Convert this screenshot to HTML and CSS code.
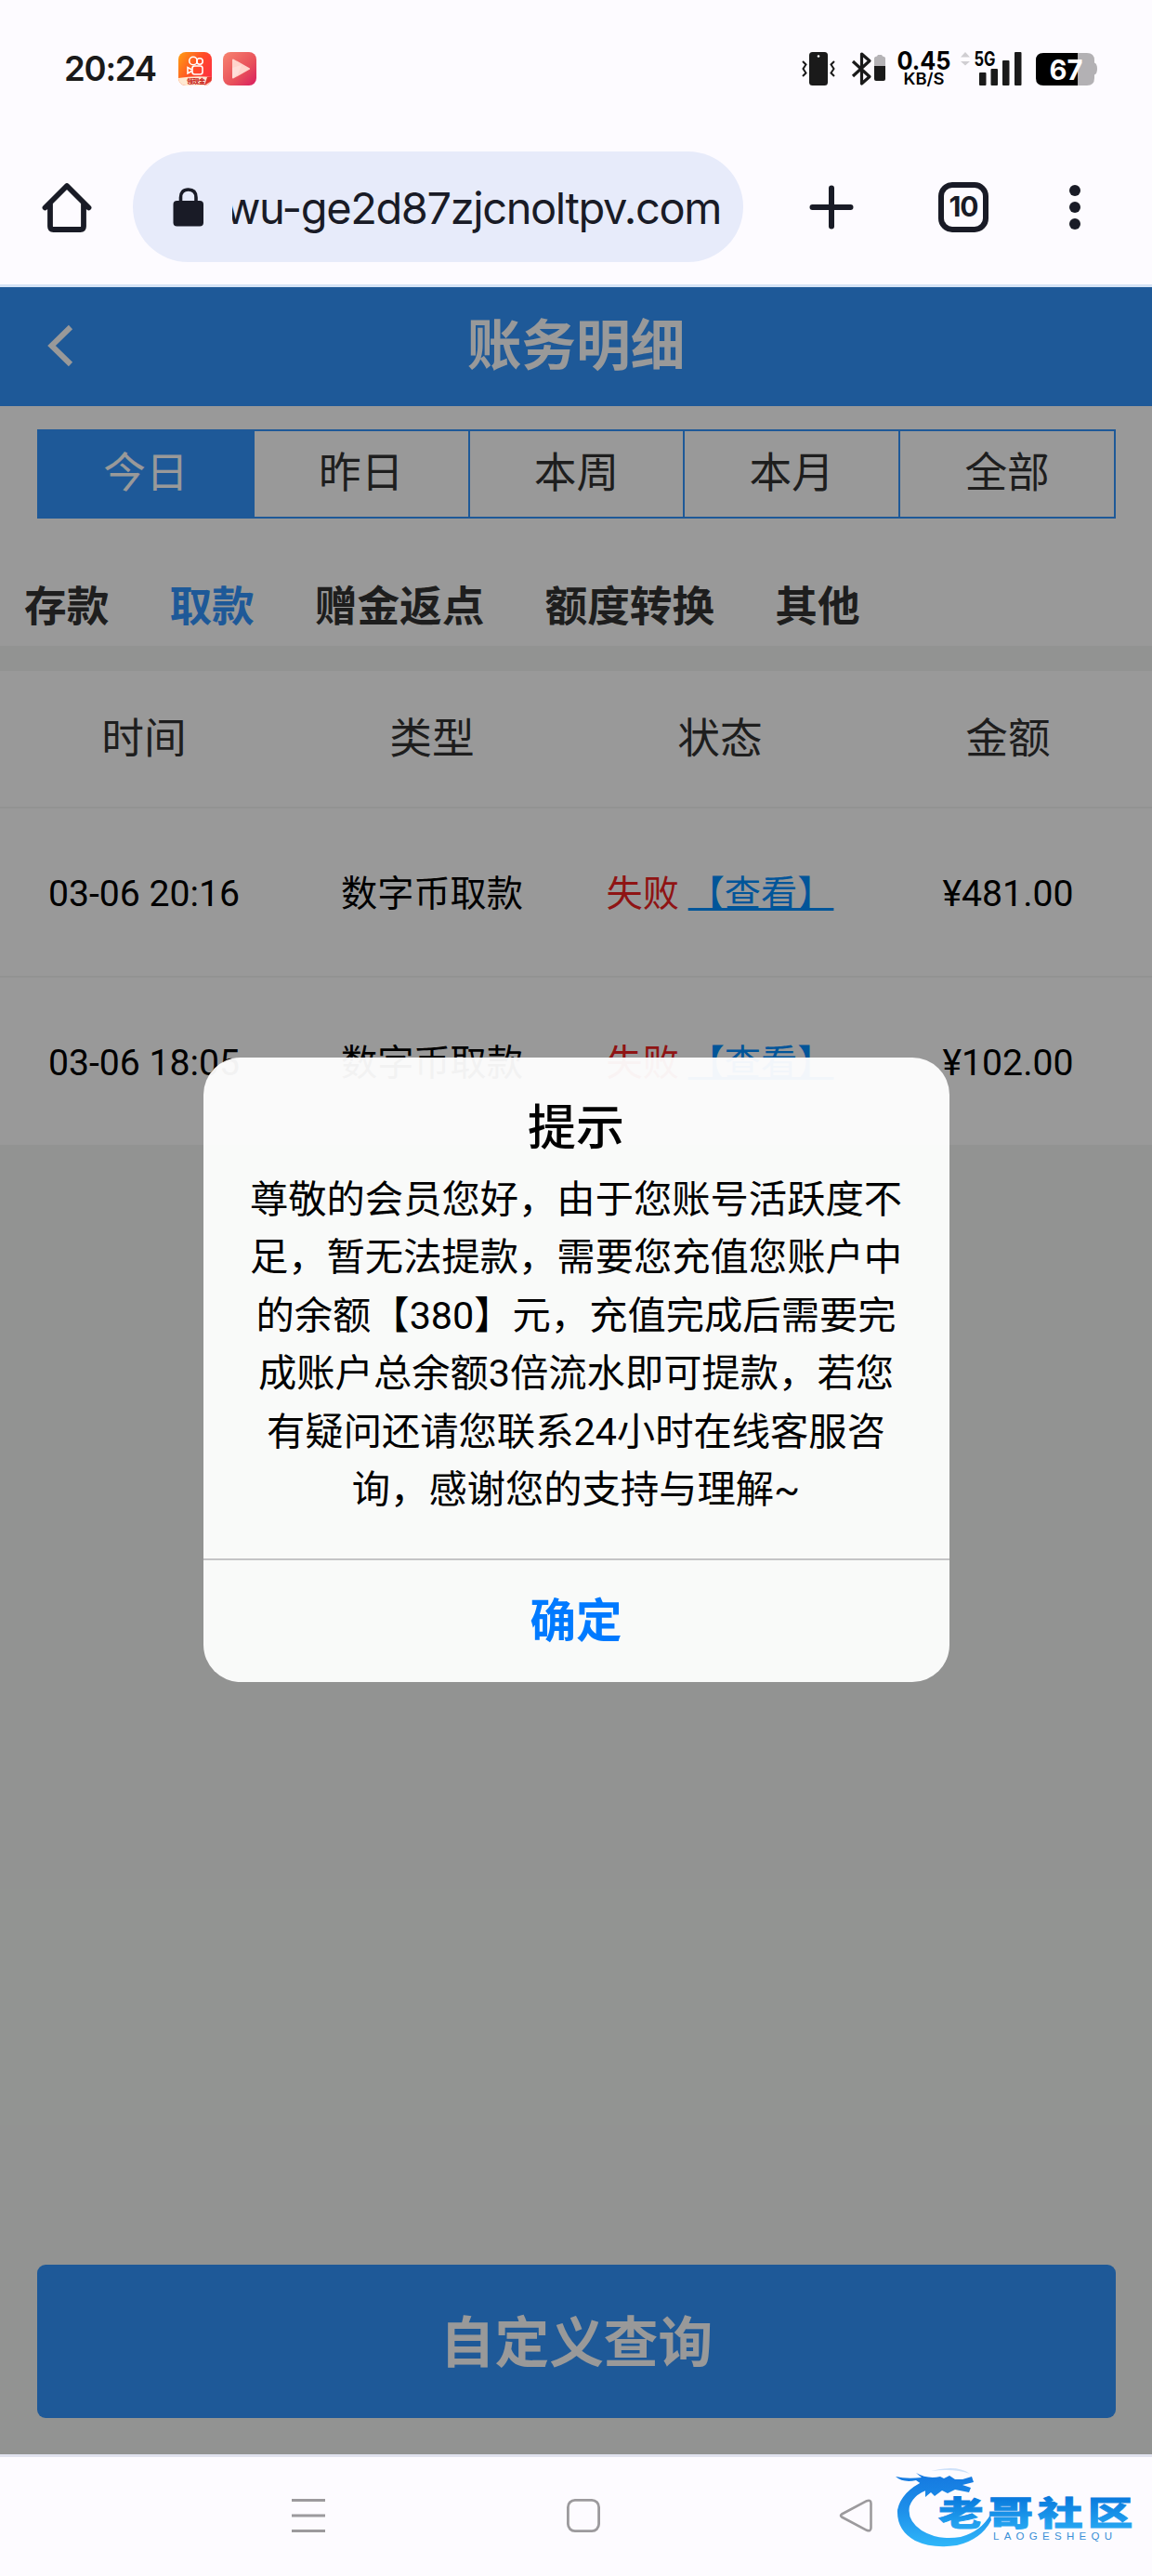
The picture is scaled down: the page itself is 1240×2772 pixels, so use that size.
FILE: index.html
```html
<!DOCTYPE html>
<html lang="zh-CN">
<head>
    <meta charset="UTF-8">
    <meta name="viewport" content="width=device-width, initial-scale=1.0">
    <title>账务明细</title>
    <link rel="stylesheet" href="styles.css">
</head>
<body>
    <div class="phone">
        <div class="status-bar">
            <span class="clock">20:24</span>
            <svg class="app-icon" width="36" height="36" viewBox="0 0 36 36">
                <defs>
                    <linearGradient id="kwai" x1="0" y1="0" x2="1" y2="0.6">
                        <stop offset="0" stop-color="#ffa012"/>
                        <stop offset="0.6" stop-color="#ff4a28"/>
                        <stop offset="1" stop-color="#ff3340"/>
                    </linearGradient>
                    <clipPath id="round"><rect width="36" height="36" rx="8"/></clipPath>
                </defs>
                <g clip-path="url(#round)">
                    <rect width="36" height="36" fill="url(#kwai)"/>
                    <path d="M0 28Q18 25 36 27L34 36H0Z" fill="#ffe9d2"/>
                    <g fill="none" stroke="#fff" stroke-width="1.6">
                        <circle cx="16" cy="9.5" r="4.3"/>
                        <circle cx="23" cy="10" r="3.2"/>
                        <rect x="15" y="15" width="11" height="9" rx="2.5"/>
                        <path d="M14.500 19L10 16.500V23L14.500 20.500"/>
                    </g>
                    <text x="9" y="34" font-size="7" font-weight="900" fill="#c8281e" textLength="20">领现金</text>
                    <path d="M31 27L28 36L36 31V27Z" fill="#e2372c"/>
                </g>
            </svg>
            <svg class="app-icon" width="36" height="36" viewBox="0 0 36 36">
                <defs>
                    <linearGradient id="video" x1="0" y1="0" x2="1" y2="1">
                        <stop offset="0" stop-color="#f78470"/>
                        <stop offset="0.6" stop-color="#e8505a"/>
                        <stop offset="1" stop-color="#d81c60"/>
                    </linearGradient>
                </defs>
                <rect width="36" height="36" rx="8" fill="url(#video)"/>
                <path d="M11 8.500L28 18L11 27.500Z" fill="#ffd5cc" stroke="#ffd5cc" stroke-width="2" stroke-linejoin="round"/>
                <path d="M10 17L20 14L16 24L10 28Z" fill="#fff" opacity="0.250"/>
            </svg>

            <svg class="status-icons" width="322" height="60" viewBox="860 44 322 60">
                <!-- vibrate -->
                <rect x="871" y="56" width="20" height="36" rx="3.500" fill="#1a1a1a"/>
                <circle cx="881" cy="60.500" r="1.300" fill="#fff"/>
                <path d="M864 66l3.500 3.500-3 4.500 3 4.500-3.500 3.500M898 66l-3.500 3.500 3 4.500-3 4.500 3.500 3.500" fill="none" stroke="#1a1a1a" stroke-width="2"/>
                <!-- bluetooth -->
                <path d="M918 66l18 16.500-8.500 7.500V58l8.500 7.500L918 82" fill="none" stroke="#1a1a1a" stroke-width="3.200" stroke-linejoin="round"/>
                <path d="M941 62.500q0-1.500 3-2l1-1.500h4l1 1.500q3 .5 3 2V71h-12Z" fill="#b5b3b6"/>
                <path d="M941 71h12v14q0 2-2 2h-8q-2 0-2-2Z" fill="#1a1a1a"/>
                <!-- network speed -->
                <text class="st" x="965.500" y="75.300" font-size="26.500" textLength="58" lengthAdjust="spacingAndGlyphs">0.45</text>
                <text class="st speed-unit" x="972.500" y="91.300" font-size="17.500" textLength="44" lengthAdjust="spacingAndGlyphs">KB/S</text>
                <path d="M1034 61.500l5-5.500 5 5.500ZM1034 66l5 4.500 5-4.500Z" fill="#d0ced2"/>
                <!-- signal -->
                <text class="st" x="1048.500" y="71" font-size="21" textLength="23" lengthAdjust="spacingAndGlyphs">5G</text>
                <g fill="#1a1a1a">
                    <rect x="1054" y="78" width="7.500" height="14" rx="1"/>
                    <rect x="1066.500" y="74" width="7.500" height="18" rx="1"/>
                    <rect x="1079" y="65" width="7.500" height="27" rx="1"/>
                    <rect x="1092" y="56" width="7.500" height="36" rx="1"/>
                </g>
                <!-- battery -->
                <path d="M1160 57h10q8 0 8 8v2.500q3 1 3 6.500t-3 6.500V84q0 8-8 8h-10Z" fill="#b3b1b4"/>
                <path d="M1160 57h-37q-8 0-8 8v19q0 8 8 8h37Z" fill="#000"/>
                <text class="st" x="1129.500" y="85.500" font-size="30" fill="#fff" textLength="36" lengthAdjust="spacingAndGlyphs">67</text>
            </svg>
        </div>

        <div class="browser-bar">
            <svg class="home" width="54" height="54" viewBox="0 0 54 54" fill="none" stroke="#191b26" stroke-width="6" stroke-linejoin="round" stroke-linecap="round">
                <path d="M3.500 27.500L27 4L50.500 27.500M9 23V47.500Q9 51 12.500 51H41.500Q45 51 45 47.500V23" stroke-width="5.800"/>
            </svg>
            <div class="url-box">
                <svg width="34" height="42" viewBox="0 0 34 42">
                    <rect x="0.500" y="14" width="32.500" height="27.500" rx="4" fill="#191b26"/>
                    <path d="M8.500 16V10.500Q8.500 2 16.700 2T25 10.500V16" fill="none" stroke="#191b26" stroke-width="3.600"/>
                </svg>
                <div class="url"><span>wu-ge2d87zjcnoltpv.com</span></div>
            </div>
            <svg class="plus" width="48" height="48" viewBox="0 0 48 48" stroke="#191b26" stroke-width="6" stroke-linecap="round">
                <path d="M24 3.500V44.500M3.500 24H44.500"/>
            </svg>
            <div class="tab-count">10</div>
            <svg class="dots" width="12" height="48" viewBox="0 0 12 48" fill="#191b26">
                <circle cx="6" cy="6" r="6"/>
                <circle cx="6" cy="24" r="6"/>
                <circle cx="6" cy="42" r="6"/>
            </svg>
        </div>

        <div class="webview">
            <div class="header">
                <svg class="back" width="30" height="48" viewBox="0 0 30 48" fill="none" stroke="#fff" stroke-width="6">
                    <path d="M26 4L5.500 24L26 44"/>
                </svg>
                <h1>账务明细</h1>
            </div>

            <div class="filters">
                <div class="range">
                    <div class="range-item active">今日</div>
                    <div class="range-item">昨日</div>
                    <div class="range-item">本周</div>
                    <div class="range-item">本月</div>
                    <div class="range-item">全部</div>
                </div>
                <div class="types">
                    <span>存款</span>
                    <span class="active">取款</span>
                    <span>赠金返点</span>
                    <span>额度转换</span>
                    <span>其他</span>
                </div>
            </div>

            <div class="list">
                <div class="row head">
                    <div>时间</div>
                    <div>类型</div>
                    <div>状态</div>
                    <div>金额</div>
                </div>
                <div class="row">
                    <div>03-06 20:16</div>
                    <div>数字币取款</div>
                    <div><span class="fail">失败</span> <a class="look">【查看】</a></div>
                    <div>¥481.00</div>
                </div>
                <div class="row">
                    <div>03-06 18:05</div>
                    <div>数字币取款</div>
                    <div><span class="fail">失败</span> <a class="look">【查看】</a></div>
                    <div>¥102.00</div>
                </div>
            </div>

            <button class="query">自定义查询</button>

            <div class="mask">
                <div class="dialog">
                    <div class="dialog-body">
                        <h2>提示</h2>
                        <p>尊敬的会员您好，由于您账号活跃度不足，暂无法提款，需要您充值您账户中的余额【380】元，充值完成后需要完成账户总余额3倍流水即可提款，若您有疑问还请您联系24小时在线客服咨询，感谢您的支持与理解~</p>
                    </div>
                    <button class="ok">确定</button>
                </div>
            </div>
        </div>

        <div class="nav-bar">
            <svg width="36" height="36" viewBox="0 0 36 36" stroke="#9c9a9d" stroke-width="3">
                <path d="M0 1.500H36M0 18H36M0 34.500H36"/>
            </svg>
            <svg width="36" height="36" viewBox="0 0 36 36" fill="none" stroke="#9c9a9d" stroke-width="2.800">
                <rect x="1.400" y="1.400" width="33.200" height="33.200" rx="7.500"/>
            </svg>
            <svg class="nav-back" width="36" height="36" viewBox="0 0 36 36" fill="none" stroke="#9c9a9d" stroke-width="2.600" stroke-linejoin="round">
                <path d="M3 16.500L30 2.200Q34.500 0.500 34.500 5V31Q34.500 35.500 30 33.800L3 19.500Q1 18 3 16.500Z"/>
            </svg>
            <svg class="watermark" width="270" height="90" viewBox="960 2652 270 90">
                <defs>
                    <linearGradient id="ring" gradientUnits="userSpaceOnUse" x1="0" y1="2662" x2="0" y2="2742">
                        <stop offset="0" stop-color="#1478e0"/>
                        <stop offset="0.500" stop-color="#1e90ea"/>
                        <stop offset="1" stop-color="#30b8fa"/>
                    </linearGradient>
                    <linearGradient id="word" x1="0" y1="0.200" x2="0" y2="1">
                        <stop offset="0" stop-color="#0878dc"/>
                        <stop offset="1" stop-color="#2cb0f6"/>
                    </linearGradient>
                </defs>
                <g fill="url(#ring)">
                    <path d="M996 2669Q970 2681 966 2701Q965 2723 985 2734Q1004 2743 1030 2739Q1056 2733 1067 2712L1066 2706Q1056 2724 1034 2730Q1010 2734 992 2723Q976 2712 979 2697Q984 2682 1006 2677Z"/>
                    <path d="M964 2665Q976 2668 992 2666L986 2661Q998 2668 1012 2665L1016 2667L1022 2664L1028 2668L1036 2668L1046 2665L1048 2671L1036 2674L1045 2677L1043 2682L1028 2679L1020 2683L1014 2680L1006 2686L1002 2682L996 2687L996 2676L986 2669Q972 2672 964 2665Z"/>
                    <path d="M1002 2659Q1030 2652 1044 2662Q1028 2656 1002 2659Z" opacity="0.200"/>
                </g>
                <g transform="translate(1010 2718) scale(1.350 1)">
                    <text class="wm" x="0" y="0" font-size="36" fill="url(#word)" stroke="url(#word)" stroke-width="0.800" textLength="155">老哥社区</text>
                </g>
                <text class="wm-en" x="1069" y="2732.500" font-size="11.500" fill="#3a8fd6" textLength="128">LAOGESHEQU</text>
            </svg>
        </div>
    </div>
</body>
</html>
```

FILE: styles.css
```css
* {
    box-sizing: border-box;
}

body {
    margin: 0;
    font-family: Roboto, "Noto Sans CJK SC", sans-serif;
    background-color: #fdfbff;
}

svg {
    display: block;
    flex-shrink: 0;
}

button {
    border: none;
    padding: 0;
    font-family: inherit;
}

.phone {
    width: 1240px;
    height: 2772px;
    display: flex;
    flex-direction: column;
    overflow: hidden;
}

/* system status bar */
.status-bar {
    height: 150px;
    padding: 0 58px 2px 69px;
    display: flex;
    align-items: center;
}

.clock {
    width: 123px;
    font-family: Inter, sans-serif;
    font-size: 36.5px;
    font-weight: 600;
    letter-spacing: -1.2px;
    color: #1a1a1a;
}

.app-icon {
    margin-right: 12px;
}

.status-icons {
    margin-left: auto;
}

.st {
    font-family: Inter, sans-serif;
    font-weight: 700;
}

.speed-unit {
    font-weight: 600;
}

/* browser toolbar */
.browser-bar {
    height: 159px;
    padding: 13px 77px 24px 45px;
    display: flex;
    align-items: center;
    border-bottom: 3px solid #d5e3f5;
}

.url-box {
    width: 657px;
    height: 119px;
    margin-left: 44px;
    padding: 0 24px 0 43px;
    display: flex;
    align-items: center;
    border-radius: 60px;
    background-color: #e7ebfa;
}

.url {
    width: 526px;
    margin-left: 30px;
    padding-top: 3px;
    display: flex;
    justify-content: flex-end;
    overflow: hidden;
    font-family: Inter, sans-serif;
    font-size: 47px;
    line-height: 70px;
    letter-spacing: -1.4px;
    white-space: nowrap;
    color: #191b26;
}

.plus {
    margin-left: 71px;
}

.tab-count {
    width: 54px;
    height: 54px;
    margin-left: 91px;
    border: 6px solid #191b26;
    border-radius: 15px;
    font-family: Inter, sans-serif;
    font-size: 30px;
    font-weight: 700;
    line-height: 41px;
    text-align: center;
    letter-spacing: -1px;
    color: #191b26;
}

.dots {
    margin-left: auto;
}

/* page */
.webview {
    position: relative;
    height: 2332px;
    display: flex;
    flex-direction: column;
    background-color: #f3f6f4;
}

.header {
    height: 128px;
    display: grid;
    grid-template-columns: 120px 1fr 120px;
    align-items: center;
    background-color: #3294fd;
    color: #fff;
}

.back {
    margin: 0 0 2px 50px;
}

.header h1 {
    margin: 0;
    font-size: 58.7px;
    font-weight: 700;
    line-height: 128px;
    text-align: center;
}

.filters {
    height: 258px;
    padding-top: 25px;
    background-color: #fff;
    color: #333;
}

.range {
    height: 96px;
    margin: 0 39px 0 40px;
    display: flex;
    border: 2px solid #3294fd;
}

.range-item {
    flex: 1;
    font-size: 45.7px;
    line-height: 92px;
    text-align: center;
}

.range-item + .range-item {
    border-left: 2px solid #3294fd;
}

.range .active {
    background-color: #3294fd;
    color: #fff;
}

.types {
    display: flex;
    gap: 65px;
    margin-top: 56px;
    padding-left: 26px;
    font-size: 45.7px;
    font-weight: 700;
    line-height: 80px;
}

.types .active {
    color: #3294fd;
}

.list {
    margin-top: 27px;
}

.row {
    height: 182px;
    display: grid;
    grid-template-columns: repeat(4, 1fr);
    border-bottom: 2px solid #f3f6f4;
    background-color: #fff;
    font-size: 39.2px;
    line-height: 184px;
    text-align: center;
    color: #000;
}

.row.head {
    height: 148px;
    font-size: 45.7px;
    line-height: 148px;
    color: #333;
}

.fail {
    color: #ee2222;
}

.look {
    color: #028eff;
    text-decoration: underline;
}

.query {
    height: 165px;
    margin: auto 39px 39px 40px;
    padding-bottom: 6px;
    border-radius: 9px;
    background-color: #3294fd;
    font-size: 58.7px;
    font-weight: 700;
    color: #fff;
}

/* alert */
.mask {
    position: absolute;
    inset: 0;
    display: flex;
    justify-content: center;
    align-items: center;
    background-color: rgba(0, 0, 0, 0.4);
}

.dialog {
    width: 803px;
    height: 672px;
    margin-bottom: 3px;
    display: flex;
    flex-direction: column;
    border-radius: 40px;
    overflow: hidden;
    background-color: rgba(255, 255, 255, 0.95);
    text-align: center;
    color: #000;
}

.dialog-body {
    height: 541px;
    padding: 39px 48px 0;
    border-bottom: 2px solid #c4c4c6;
}

.dialog h2 {
    margin: 0;
    font-size: 52px;
    font-weight: 500;
    line-height: 76px;
}

.dialog p {
    margin: 7px 0 0;
    font-size: 41.3px;
    line-height: 62.5px;
}

.ok {
    flex: 1;
    padding-bottom: 8px;
    background: none;
    font-size: 49.5px;
    font-weight: 700;
    color: #007aff;
}

/* system navigation */
.nav-bar {
    position: relative;
    flex: 1;
    display: flex;
    gap: 260px;
    padding: 45px 0 0 314px;
    border-top: 3px solid #e0e2ee;
}

.nav-back {
    margin-left: -3px;
}

.watermark {
    position: absolute;
    right: 10px;
    top: 8px;
}

.wm {
    font-family: "Noto Sans CJK SC", sans-serif;
    font-weight: 900;
}

.wm-en {
    font-family: "Liberation Sans", sans-serif;
    font-weight: 400;
}
```
